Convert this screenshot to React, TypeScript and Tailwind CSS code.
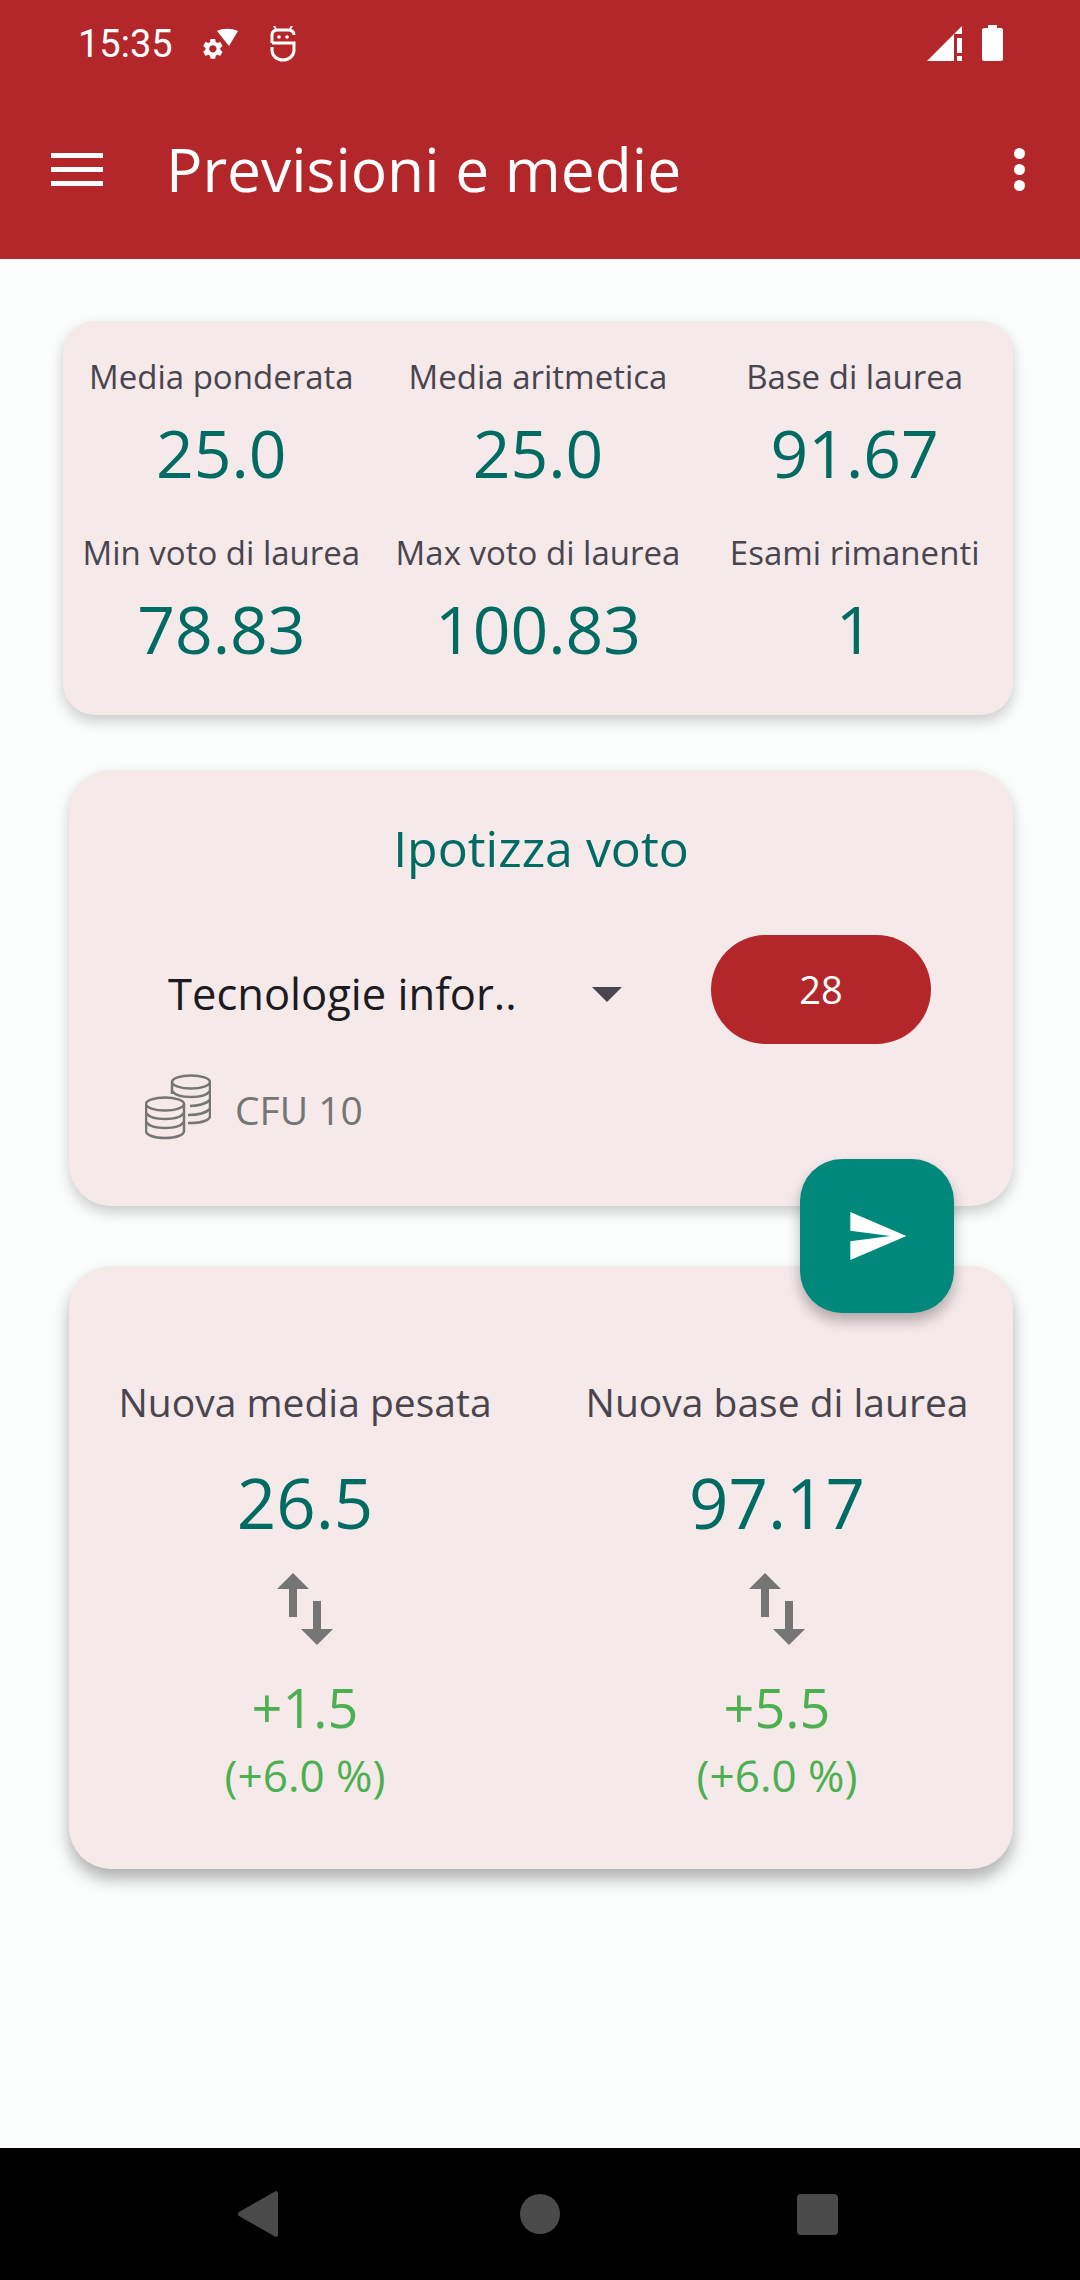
const labelClass = 'text-[33px] leading-[44px] text-[#49454f] whitespace-nowrap';
const valueClass = 'mt-[9px] text-[66px] leading-[88px] text-[#006b63]';

const stats = [
    { label: 'Media ponderata', value: '25.0' },
    { label: 'Media aritmetica', value: '25.0' },
    { label: 'Base di laurea', value: '91.67' },
    { label: 'Min voto di laurea', value: '78.83' },
    { label: 'Max voto di laurea', value: '100.83' },
    { label: 'Esami rimanenti', value: '1' },
];

const results = [
    { label: 'Nuova media pesata', value: '26.5', diff: '+1.5', percent: '(+6.0 %)' },
    { label: 'Nuova base di laurea', value: '97.17', diff: '+5.5', percent: '(+6.0 %)' },
];

function StatusIcons() {
    return (
        <div className="flex items-center">
            <svg width="36" height="34" viewBox="0 0 36 34" className="ml-[30px]" fill="white">
                <path d="M14 4 C20 1 28 1 35 4 L26 19 Z" />
                <g transform="translate(-2.500 9.500) scale(1.030)">
                    <path d="M19.140 12.940c.04-.3.06-.61.06-.94 0-.32-.02-.64-.07-.94l2.030-1.580c.18-.14.23-.41.12-.61l-1.920-3.320c-.12-.22-.37-.29-.59-.22l-2.390.96c-.5-.38-1.030-.7-1.620-.94l-.36-2.540c-.04-.24-.24-.41-.48-.41h-3.840c-.24 0-.43.17-.47.41l-.36 2.540c-.59.24-1.130.57-1.620.94l-2.390-.96c-.22-.08-.47 0-.59.22L2.740 8.870c-.12.21-.08.47.12.61l2.030 1.580c-.05.3-.09.63-.09.94s.02.64.07.94l-2.030 1.580c-.18.14-.23.41-.12.61l1.920 3.320c.12.22.37.29.59.22l2.390-.96c.5.38 1.030.7 1.620.94l.36 2.540c.05.24.24.41.48.41h3.840c.24 0 .44-.17.47-.41l.36-2.540c.59-.24 1.130-.56 1.620-.94l2.390.96c.22.08.47 0 .59-.22l1.920-3.320c.12-.22.07-.47-.12-.61l-2.010-1.580zM12 15.600c-1.980 0-3.600-1.620-3.600-3.600s1.620-3.600 3.600-3.600 3.600 1.620 3.600 3.600-1.620 3.600-3.600 3.600z" />
                </g>
            </svg>
            <svg width="28" height="36" viewBox="0 0 28 36" className="ml-[30px]" fill="none" stroke="white" strokeWidth="3">
                <path d="M3 17 V9 C3 5 6 4 9 4 H19 C23 4 25 6 25 9" />
                <path d="M3 17 H25 V24 C25 30 20 34 14 34 C8 34 3 30 3 24 V21" />
                <path d="M7 3 L5 0 M21 3 L23 0" strokeWidth="2" />
                <circle cx="10" cy="11" r="1.800" fill="white" stroke="none" />
                <circle cx="18" cy="11" r="1.800" fill="white" stroke="none" />
            </svg>
        </div>
    );
}

function CoinsIcon() {
    return (
        <svg width="66" height="66" viewBox="0 0 66 66" fill="none" stroke="#757575" strokeWidth="2.500">
            <ellipse cx="46" cy="8" rx="19" ry="6.500" />
            <path d="M27 8 V20 M65 8 V42 C65 46 57 49 46 49 H43" />
            <path d="M27 17 C30 21 37 23 46 23 C55 23 62 21 65 17" />
            <path d="M45 32 C52 32 61 30 65 26" />
            <path d="M43 41 C52 41 61 39 65 35" />
            <ellipse cx="20" cy="30" rx="19" ry="6.500" />
            <path d="M1 30 V57 C1 61 9 64 20 64 C31 64 39 61 39 57 V30" />
            <path d="M1 39 C4 43 11 45 20 45 C29 45 36 43 39 39" />
            <path d="M1 48 C4 52 11 54 20 54 C29 54 36 52 39 48" />
        </svg>
    );
}

export default function App() {
    return (
        <div className="relative flex flex-col h-[2280px] w-[1080px] overflow-hidden bg-[#fbfdfc] font-['Open_Sans',sans-serif]">
            {/* status bar + toolbar */}
            <header className="h-[259px] bg-[#b3272b] text-white shrink-0">
                <div className="h-[84px] flex items-center justify-between pl-[78px] pr-[77px] pt-[4px]">
                    <div className="flex items-center">
                        <span className="font-['Roboto',sans-serif] text-[38px] leading-none">15:35</span>
                        <StatusIcons />
                    </div>
                    <div className="flex items-center gap-[20px] mt-[-2px]">
                        <svg width="35" height="35" viewBox="0 0 35 35" fill="white">
                            <path d="M0 35 L35 0 V8 H27 V35 Z" />
                            <rect x="30" y="12" width="5" height="15" />
                            <rect x="30" y="30" width="5" height="5" />
                        </svg>
                        <svg width="21" height="36" viewBox="0 0 21 36" fill="white">
                            <path d="M6 0 H15 V3 H19 C20 3 21 4 21 5 V34 C21 35 20 36 19 36 H2 C1 36 0 35 0 34 V5 C0 4 1 3 2 3 H6 Z" />
                        </svg>
                    </div>
                </div>
                <div className="h-[175px] flex items-center pb-[4px]">
                    <div className="ml-[51px] flex flex-col gap-[9px] w-[52px]">
                        <div className="h-[5px] bg-white" />
                        <div className="h-[5px] bg-white" />
                        <div className="h-[5px] bg-white" />
                    </div>
                    <h1 className="ml-[63px] text-[60.500px] leading-none font-normal flex-1">Previsioni e medie</h1>
                    <div className="mr-[55px] flex flex-col gap-[5px]">
                        <div className="w-[11px] h-[11px] rounded-full bg-white" />
                        <div className="w-[11px] h-[11px] rounded-full bg-white" />
                        <div className="w-[11px] h-[11px] rounded-full bg-white" />
                    </div>
                </div>
            </header>

            <main className="flex-1 flex flex-col pt-[62px] pr-[67px]">
                <section className="ml-[63px] h-[394px] rounded-[32px] bg-[#f5e9ea] shadow-[0_6px_14px_rgba(0,0,0,0.2)] grid grid-cols-3 content-start gap-y-[35px] pt-[34px] text-center">
                    {stats.map((stat) => (
                        <div key={stat.label} className="flex flex-col items-center">
                            <div className={labelClass}>{stat.label}</div>
                            <div className={valueClass}>{stat.value}</div>
                        </div>
                    ))}
                </section>

                <section className="relative ml-[69px] mt-[55px] h-[436px] rounded-[42px] bg-[#f5e9ea] shadow-[0_6px_14px_rgba(0,0,0,0.2)] flex flex-col">
                    <h2 className="text-center font-normal text-[50px] leading-[64px] mt-[46px] text-[#006b63]">Ipotizza voto</h2>
                    <div className="flex items-center mt-[55px] pl-[99px]">
                        <span className="text-[43.500px] leading-[60px] mt-[9px] text-[#1c1b1f] w-[424px] whitespace-nowrap">Tecnologie infor..</span>
                        <div className="mt-[9px] w-0 h-0 border-x-[15px] border-x-transparent border-t-[15px] border-t-[#49454f]" />
                        <button className="ml-[89px] w-[220px] h-[109px] rounded-[55px] bg-[#b3272b] text-white text-[38px]">28</button>
                    </div>
                    <div className="flex items-center mt-[30px] pl-[76px]">
                        <CoinsIcon />
                        <span className="ml-[24px] mt-[6px] text-[39px] leading-[52px] text-[#757575]">CFU 10</span>
                    </div>
                </section>

                <section className="ml-[69px] mt-[60px] h-[603px] rounded-[42px] bg-[#f5e9ea] shadow-[0_10px_16px_rgba(0,0,0,0.3)] grid grid-cols-2 pt-[110px] text-center">
                    {results.map((r) => (
                        <div key={r.label} className="flex flex-col items-center">
                            <div className="text-[39px] leading-[52px] text-[#49454f] whitespace-nowrap">{r.label}</div>
                            <div className="mt-[29px] text-[69px] leading-[90px] text-[#006b63]">{r.value}</div>
                            <svg width="96" height="96" viewBox="0 0 24 24" fill="#757575" className="mt-[14px]">
                                <path d="M16 17.010V10h-2v7.010h-3L15 21l4-3.990h-3zM9 3L5 6.990h3V14h2V6.990h3L9 3z" />
                            </svg>
                            <div className="mt-[15px] text-[54px] leading-[70px] text-[#4caf50]">{r.diff}</div>
                            <div className="text-[44px] leading-[54px] text-[#4caf50] mt-[6px]">{r.percent}</div>
                        </div>
                    ))}
                </section>
            </main>

            <button className="absolute left-[800px] top-[1159px] w-[154px] h-[154px] rounded-[42px] bg-[#00897b] flex items-center justify-center shadow-[0_8px_14px_rgba(0,0,0,0.28)]">
                <svg width="64" height="64" viewBox="0 0 24 24" fill="white">
                    <path d="M2.010 21L23 12 2.010 3 2 10l15 2-15 2z" />
                </svg>
            </button>

            <nav className="h-[132px] shrink-0 bg-black flex items-center pl-[238px]">
                <svg width="40" height="46" viewBox="0 0 40 46" fill="#4a4a4a">
                    <path d="M38 0 C39 0 40 1 40 2 V44 C40 45 39 46 38 46 C37.500 46 37 45.800 36.500 45.300 L1 25 C-0.500 24 -0.500 22 1 21 L36.500 .7 C37 .2 37.500 0 38 0 Z" />
                </svg>
                <div className="ml-[242px] w-[40px] h-[40px] rounded-full bg-[#4a4a4a]" />
                <div className="ml-[237px] w-[41px] h-[41px] rounded-[4px] bg-[#4a4a4a]" />
            </nav>
        </div>
    );
}
